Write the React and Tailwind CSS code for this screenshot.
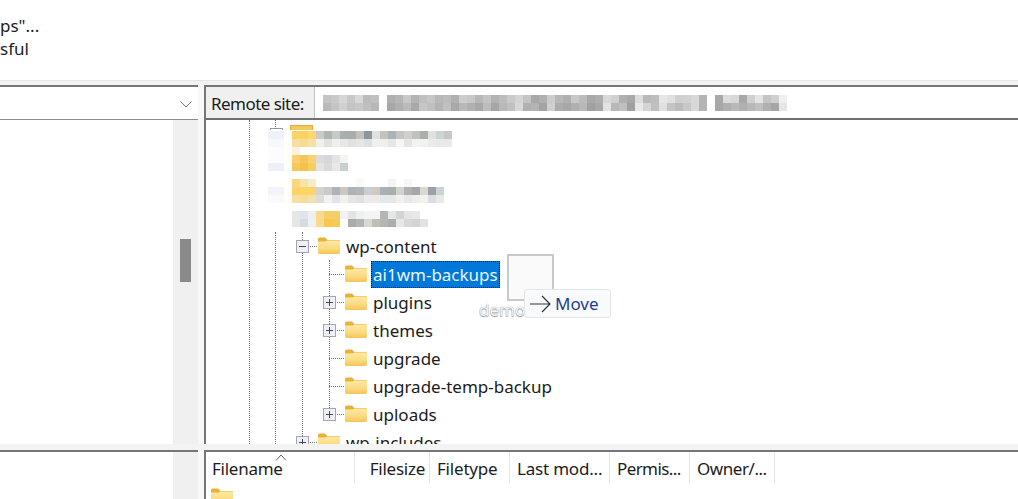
import React, { useId } from "react";

const FONT = "font-['Noto_Sans','Open_Sans',sans-serif]";

function Folder({ className = "" }) {
  const id = useId();
  return (
    <svg width="22" height="17" viewBox="0 0 22 17" className={`shrink-0 ${className}`}>
      <defs>
        <linearGradient id={id} x1="0" y1="0" x2="0" y2="1">
          <stop offset="0" stopColor="#fee9a6" />
          <stop offset="0.55" stopColor="#fbdc84" />
          <stop offset="1" stopColor="#f4c655" />
        </linearGradient>
      </defs>
      <path d="M0 2 Q0 0.5 1.5 0.5 H7 L9.5 3 H22 V6 H0 Z" fill="#e9b23a" />
      <path d="M0 4.5 H7.5 L9.5 3.5 H22 V15.5 Q22 17 20.5 17 H1.5 Q0 17 0 15.5 Z" fill={`url(#${id})`} />
    </svg>
  );
}

function Expander({ open }) {
  return (
    <svg width="13" height="13" viewBox="0 0 13 13" className="shrink-0">
      <rect x="0.5" y="0.5" width="12" height="12" fill="#eef0f6" stroke="#a3a6ad" />
      <path d="M3 6.5H10" stroke="#40465a" />
      {!open && <path d="M6.5 3V10" stroke="#40465a" />}
    </svg>
  );
}

function Row({ depth, exp, open, children, selected }) {
  const pad = depth === 0 ? "pl-[90px]" : "pl-[117px]";
  return (
    <div className={`flex h-[28px] shrink-0 items-center ${pad}`}>
      {exp ? (
        <Expander open={open} />
      ) : (
        <span className="ml-[6px] h-0 w-[7px] shrink-0 border-t border-dotted border-[#777]" />
      )}
      <span className="ml-px mr-px h-0 w-[7px] border-t border-dotted border-[#777]" />
      <Folder className="-translate-y-px" />
      {selected ? (
        <span className="ml-[4px] flex h-[27px] w-[129px] items-center border border-dotted border-[#111] bg-[#0078d7] pl-[1px] text-[#eaf6ff]">
          {children}
        </span>
      ) : (
        <span className="ml-[6px]">{children}</span>
      )}
    </div>
  );
}

const blurRows = [
  { x: 0, y: 11, c: ["#eef2f8","#eef2f8","#fffef9","#fad469","#fdd25f","#fcd66f","#c9cbc6","#aeb5b3","#c4cbc6","#aaaeae","#a9adad","#c0c2bc","#8e969c","#dfe2e0","#c0c4bb","#acb3b8","#c4c6c6","#cfd1cd","#bfc3bd","#aab0a9","#e0e2e0","#cdd3d3","#c5c8c8"] },
  { x: 0, y: 19, c: ["#f6f8fb","#f6f8fb","#fffef9","#f6dfa2","#f8dc95","#f5e0a8","#f0f0ec","#dfe2df","#eef0ee","#e8e9e6","#e1e2e0","#e8e6e4","#dee1e2","#f0f1ef","#eff0ed","#e6e8e6","#f6f6f4","#e4e5e4","#f3f3f1","#f1f1ef","#ebecea","#e8eaea","#e9eae8"] },
  { x: 0, y: 27, c: ["#fbfcfe","#fbfcfe","#ffffff","#fbf2d9"] },
  { x: 0, y: 35, c: ["#fbfcfe","#fbfcfe","#fffffa","#fbd069","#f4c660","#f9d26f","#dcdadb","#d8d6d8","#e2e3e3","#f4f4f2"] },
  { x: 0, y: 43, c: ["#eef0f7","#eef0f7","#fffffa","#f6c75a","#f3c247","#f6cd62","#e4e4e2","#dcd9db","#e6e9e8","#c8cfd3"] },
  { x: 0, y: 59, c: ["#ffffff","#ffffff","#fffef8","#fad77f","#f6e3a8","#f8ecc8","#ffffff","#ffffff","#ffffff","#ffffff","#ffffff","#fafafa","#ffffff","#ffffff","#ffffff","#f5f5f5","#ffffff","#f6f6f6"] },
  { x: 0, y: 67, c: ["#f2f4f9","#f2f4f9","#fffef9","#fbd46b","#fed55f","#fbd568","#d2d2d0","#c9cbc9","#adb3b8","#cac8c0","#adb3b7","#b3b6b7","#cbced1","#cbcac4","#a7b1b6","#a8aeaa","#d0d4d0","#b0b2b2","#a5a8a6","#d8d9d4","#9ba1a8","#cdd2d2"] },
  { x: 0, y: 75, c: ["#f9fafc","#f9fafc","#fffefa","#f5dfa4","#f7dc96","#f3e0b0","#dcdcdb","#f2f2f0","#e1e3e8","#f1f1ee","#e5e5e4","#e0e1e0","#ebecea","#ecebe8","#e3e8e9","#e6e8e5","#f0f0ee","#e8e8e6","#eeeeec","#f1f1ee","#dadee2","#e8eae8"] },
  { x: 24, y: 91, c: ["#e6e6e6","#e0e4e8","#eceef0","#fad98c","#f7ce66","#f6ce68","#f2f2f2","#e4e4e4","#eff0f0","#f4f4f4","#f4f4f2","#b4b6b6","#e6e6e6","#d2d4d8","#e4e6e4","#e6e9e6"] },
  { x: 24, y: 99, c: ["#e6e6e6","#d5dbe0","#eef0f2","#f9d98e","#f6c94e","#f5c95a","#fdfcf6","#aaaaa8","#b4b4b4","#d6d8d4","#bcbeb8","#b4b6b0","#aaaeb0","#e6e8e6","#d8d8da","#d4d4d6","#e0e4e4"] },
];

function TreeMosaic() {
  return (
    <svg width="200" height="113" viewBox="0 0 200 113" shapeRendering="crispEdges" className="ml-[62px] block shrink-0">
      <path d="M22 10V5.5H44V10" fill="#f3c85f" stroke="#e0ab38" />
      <path d="M2 10V8H14V10" fill="none" stroke="#999" />
      {blurRows.map((r) =>
        r.c.map((fill, i) => <rect key={`${r.y}-${i}`} x={r.x + i * 8} y={r.y} width="8" height="8" fill={fill} />)
      )}
    </svg>
  );
}

const siteTop = [0xc4,0xc9,0xd6,0xc8,0xd8,0xbc,0xc0,0xff,0xb0,0xb6,0xc8,0xb4,0xc0,0xc6,0xb8,0xbc,0xb0,0xcc,0xc8,0xb8,0xc4,0xb2,0xbc,0xca,0xd4,0xc4,0xa8,0xb0,0xcc,0xb8,0xb0,0xc8,0xbc,0xa9,0xae,0xd8,0xd0,0xb0,0xa8,0xdc,0xb8,0xbe,0xe6,0xe0,0xd0,0xd2,0xd8,0xb4,0xff,0xa8,0xdc,0xd8,0xa8,0xd0,0xe4,0xc4,0xd0,0xf0];
const siteBot = [0xba,0xc4,0xd0,0xc4,0xc8,0xc0,0xb8,0xff,0xa8,0xb0,0xba,0xa8,0xc6,0xc0,0xb4,0xc0,0xa8,0xb8,0xb0,0xa8,0xbc,0xa6,0xb8,0xc0,0xd8,0xb0,0xb4,0xa4,0xd0,0xac,0xa8,0xb0,0xb8,0xa0,0xa8,0xe2,0xb8,0xc0,0xa0,0xe8,0xd4,0xc0,0xe0,0xc4,0xbc,0xc8,0xd8,0xb4,0xff,0xa8,0xb0,0xb8,0xb0,0xb8,0xc0,0xb0,0xa6,0xe6];

function SiteMosaic() {
  const gray = (v) => `rgb(${v},${v},${v})`;
  return (
    <svg width="464" height="16" viewBox="0 0 464 16" shapeRendering="crispEdges" className="ml-[8px] shrink-0">
      {siteTop.map((v, i) => <rect key={`t${i}`} x={i * 8} y="0" width="8" height="8" fill={gray(v)} />)}
      {siteBot.map((v, i) => <rect key={`b${i}`} x={i * 8} y="8" width="8" height="8" fill={gray(v)} />)}
    </svg>
  );
}

function Scrollbar({ thumb }) {
  return (
    <div className="w-[25px] shrink-0 bg-[#f0f0f0]">
      {thumb && <div className="mx-[7px] mt-[119px] h-[43px] bg-[#8a8a8a]" />}
    </div>
  );
}

const cols = [
  { label: "Filename", w: "w-[149px]", cls: "pl-[6px] tracking-[-0.25px]" },
  { label: "Filesize", w: "w-[75px]", cls: "justify-end pr-[4px] tracking-[-0.25px]" },
  { label: "Filetype", w: "w-[80px]", cls: "pl-[7px] tracking-[-0.2px]" },
  { label: "Last mod...", w: "w-[100px]", cls: "pl-[7px] tracking-[-0.2px]" },
  { label: "Permis...", w: "w-[80px]", cls: "pl-[7px] tracking-[-0.6px]" },
  { label: "Owner/...", w: "w-[85px]", cls: "pl-[7px] tracking-[-0.45px]" },
];

export default function App() {
  return (
    <div className={`relative flex h-[499px] w-[1018px] flex-col overflow-hidden bg-white text-[17px] leading-none text-[#1c1c1c] ${FONT}`}>
      <div className="flex h-[80px] shrink-0 flex-col pt-[14px] leading-[23px]">
        <div>ps"...</div>
        <div>sful</div>
      </div>
      <div className="h-[5px] shrink-0 border-t border-[#e6e6e6] bg-[#f3f3f3]" />

      <div className="flex h-[359px] shrink-0">
        <div className="flex w-[198px] shrink-0 flex-col border-t-2 border-[#767676]">
          <div className="flex h-[33px] shrink-0 items-center justify-end border-b border-[#8a8a8a] pr-[6px] pt-[2px]">
            <svg width="12" height="7" viewBox="0 0 12 7" fill="none" stroke="#777" strokeWidth="1">
              <path d="M0.5 0.5L6 6L11.5 0.5" />
            </svg>
          </div>
          <div className="flex flex-1">
            <div className="flex-1" />
            <Scrollbar thumb />
          </div>
        </div>
        <div className="w-[6px] shrink-0 bg-[#f8f8f8]" />
        <div className="flex min-w-0 flex-1 flex-col border-t-2 border-l-2 border-[#767676]">
          <div className="flex h-[33px] shrink-0 items-center border-b-2 border-[#6f6f6f]">
            <div className="flex h-full w-[109px] items-center border-r border-[#c4c4c4] bg-[#f0f0f0] pl-[5px] pt-px tracking-[-0.55px]">
              Remote site:
            </div>
            <SiteMosaic />
          </div>
          <div className="relative flex flex-1 flex-col overflow-hidden">
            <span className="absolute left-[43px] top-0 h-full border-l border-dotted border-[#777]" />
            <span className="absolute left-[69px] top-0 h-[9px] border-l border-dotted border-[#777]" />
            <span className="absolute left-[69px] top-[112px] h-[220px] border-l border-dotted border-[#777]" />
            <span className="absolute left-[96px] top-[112px] h-[220px] border-l border-dotted border-[#777]" />
            <span className="absolute left-[123px] top-[140px] h-[150px] border-l border-dotted border-[#777]" />
            <TreeMosaic />
            <div className="relative -mt-px flex flex-col">
              <Row depth={0} exp open>wp-content</Row>
              <Row depth={1} selected>ai1wm-backups</Row>
              <Row depth={1} exp>plugins</Row>
              <Row depth={1} exp>themes</Row>
              <Row depth={1}>upgrade</Row>
              <Row depth={1}>upgrade-temp-backup</Row>
              <Row depth={1} exp>uploads</Row>
              <Row depth={0} exp>wp-includes</Row>
            </div>
          </div>
        </div>
      </div>

      <div className="h-[6px] shrink-0 bg-[#f3f3f3]" />

      <div className="flex min-h-0 flex-1">
        <div className="flex w-[198px] shrink-0 border-t-2 border-[#767676]">
          <div className="flex-1" />
          <Scrollbar />
        </div>
        <div className="w-[6px] shrink-0 bg-[#f8f8f8]" />
        <div className="relative min-w-0 flex-1 border-t-2 border-l-2 border-[#767676]">
          <div className="flex h-[32px]">
            {cols.map((c) => (
              <div key={c.label} className={`flex h-full items-center border-r border-[#e5e5e5] ${c.w} ${c.cls}`}>
                {c.label}
              </div>
            ))}
          </div>
          <svg width="12" height="7" viewBox="0 0 12 7" fill="none" stroke="#666" className="absolute left-[69px] top-[2px]">
            <path d="M1 6.5L6 1L11 6.5" />
          </svg>
          <Folder className="ml-[5px] mt-[4px]" />
        </div>
      </div>

      <div className="absolute left-[507px] top-[254px] h-[47px] w-[47px] border-2 border-[#c9c9c9] bg-[#fafafa]" />
      <div className="absolute left-[479px] top-[301px] w-[45px] overflow-hidden text-[#f4f4f4] [text-shadow:0_1px_1px_#999,0_0_1px_#888]">demo</div>
      <div className="absolute left-[524px] top-[289px] flex h-[29px] w-[87px] items-center rounded-[3px] border border-[#e3e5ea] bg-[#f9fafc] pl-[4px] text-[#1f3c95]">
        <svg width="23" height="18" viewBox="0 0 23 18" fill="none" stroke="#333" strokeWidth="1.2" className="shrink-0">
          <path d="M1 9H21M13 1L21 9L13 17" />
        </svg>
        <span className="ml-[3px]">Move</span>
      </div>
    </div>
  );
}
